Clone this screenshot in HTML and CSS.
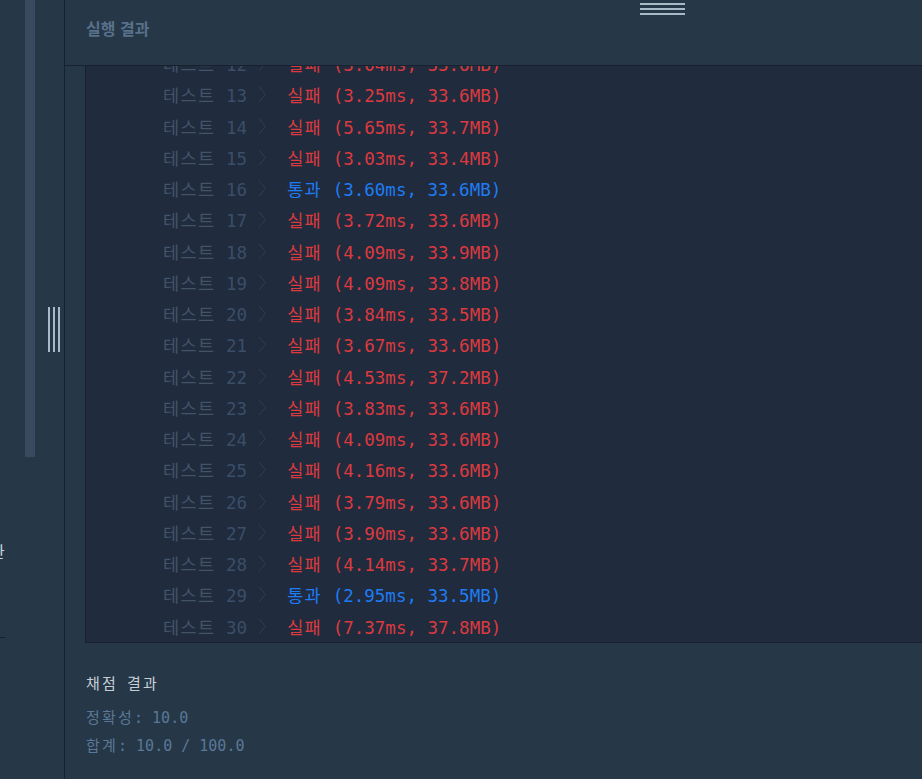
FILE: index.html
```html
<!DOCTYPE html>
<html lang="ko">
<head>
<meta charset="utf-8">
<title>실행 결과</title>
<link rel="stylesheet" href="styles.css">
</head>
<body>
<div class="app">
  <aside class="sidebar">
    <div class="track"></div>
    <div class="resizer"><span></span><span></span><span></span></div>
    <div class="side-text">한</div>
    <div class="side-line"></div>
  </aside>
  <main class="main">
    <header class="header">
      <h2 class="title">실행 결과</h2>
      <div class="handle"><span></span><span></span><span></span></div>
    </header>
    <section class="output-wrap">
      <div class="output">
        <div class="rows">
          <div class="row"><span class="label"><span class="ko">테스트</span> <span class="num">12</span></span><svg class="chev" viewBox="0 0 9 17"><path d="M1 1 L7.5 8.5 L1 16"/></svg><span class="res fail"><span class="ko">실패</span> (3.04ms, 33.6MB)</span></div>
          <div class="row"><span class="label"><span class="ko">테스트</span> <span class="num">13</span></span><svg class="chev" viewBox="0 0 9 17"><path d="M1 1 L7.5 8.5 L1 16"/></svg><span class="res fail"><span class="ko">실패</span> (3.25ms, 33.6MB)</span></div>
          <div class="row"><span class="label"><span class="ko">테스트</span> <span class="num">14</span></span><svg class="chev" viewBox="0 0 9 17"><path d="M1 1 L7.5 8.5 L1 16"/></svg><span class="res fail"><span class="ko">실패</span> (5.65ms, 33.7MB)</span></div>
          <div class="row"><span class="label"><span class="ko">테스트</span> <span class="num">15</span></span><svg class="chev" viewBox="0 0 9 17"><path d="M1 1 L7.5 8.5 L1 16"/></svg><span class="res fail"><span class="ko">실패</span> (3.03ms, 33.4MB)</span></div>
          <div class="row"><span class="label"><span class="ko">테스트</span> <span class="num">16</span></span><svg class="chev" viewBox="0 0 9 17"><path d="M1 1 L7.5 8.5 L1 16"/></svg><span class="res pass"><span class="ko">통과</span> (3.60ms, 33.6MB)</span></div>
          <div class="row"><span class="label"><span class="ko">테스트</span> <span class="num">17</span></span><svg class="chev" viewBox="0 0 9 17"><path d="M1 1 L7.5 8.5 L1 16"/></svg><span class="res fail"><span class="ko">실패</span> (3.72ms, 33.6MB)</span></div>
          <div class="row"><span class="label"><span class="ko">테스트</span> <span class="num">18</span></span><svg class="chev" viewBox="0 0 9 17"><path d="M1 1 L7.5 8.5 L1 16"/></svg><span class="res fail"><span class="ko">실패</span> (4.09ms, 33.9MB)</span></div>
          <div class="row"><span class="label"><span class="ko">테스트</span> <span class="num">19</span></span><svg class="chev" viewBox="0 0 9 17"><path d="M1 1 L7.5 8.5 L1 16"/></svg><span class="res fail"><span class="ko">실패</span> (4.09ms, 33.8MB)</span></div>
          <div class="row"><span class="label"><span class="ko">테스트</span> <span class="num">20</span></span><svg class="chev" viewBox="0 0 9 17"><path d="M1 1 L7.5 8.5 L1 16"/></svg><span class="res fail"><span class="ko">실패</span> (3.84ms, 33.5MB)</span></div>
          <div class="row"><span class="label"><span class="ko">테스트</span> <span class="num">21</span></span><svg class="chev" viewBox="0 0 9 17"><path d="M1 1 L7.5 8.5 L1 16"/></svg><span class="res fail"><span class="ko">실패</span> (3.67ms, 33.6MB)</span></div>
          <div class="row"><span class="label"><span class="ko">테스트</span> <span class="num">22</span></span><svg class="chev" viewBox="0 0 9 17"><path d="M1 1 L7.5 8.5 L1 16"/></svg><span class="res fail"><span class="ko">실패</span> (4.53ms, 37.2MB)</span></div>
          <div class="row"><span class="label"><span class="ko">테스트</span> <span class="num">23</span></span><svg class="chev" viewBox="0 0 9 17"><path d="M1 1 L7.5 8.5 L1 16"/></svg><span class="res fail"><span class="ko">실패</span> (3.83ms, 33.6MB)</span></div>
          <div class="row"><span class="label"><span class="ko">테스트</span> <span class="num">24</span></span><svg class="chev" viewBox="0 0 9 17"><path d="M1 1 L7.5 8.5 L1 16"/></svg><span class="res fail"><span class="ko">실패</span> (4.09ms, 33.6MB)</span></div>
          <div class="row"><span class="label"><span class="ko">테스트</span> <span class="num">25</span></span><svg class="chev" viewBox="0 0 9 17"><path d="M1 1 L7.5 8.5 L1 16"/></svg><span class="res fail"><span class="ko">실패</span> (4.16ms, 33.6MB)</span></div>
          <div class="row"><span class="label"><span class="ko">테스트</span> <span class="num">26</span></span><svg class="chev" viewBox="0 0 9 17"><path d="M1 1 L7.5 8.5 L1 16"/></svg><span class="res fail"><span class="ko">실패</span> (3.79ms, 33.6MB)</span></div>
          <div class="row"><span class="label"><span class="ko">테스트</span> <span class="num">27</span></span><svg class="chev" viewBox="0 0 9 17"><path d="M1 1 L7.5 8.5 L1 16"/></svg><span class="res fail"><span class="ko">실패</span> (3.90ms, 33.6MB)</span></div>
          <div class="row"><span class="label"><span class="ko">테스트</span> <span class="num">28</span></span><svg class="chev" viewBox="0 0 9 17"><path d="M1 1 L7.5 8.5 L1 16"/></svg><span class="res fail"><span class="ko">실패</span> (4.14ms, 33.7MB)</span></div>
          <div class="row"><span class="label"><span class="ko">테스트</span> <span class="num">29</span></span><svg class="chev" viewBox="0 0 9 17"><path d="M1 1 L7.5 8.5 L1 16"/></svg><span class="res pass"><span class="ko">통과</span> (2.95ms, 33.5MB)</span></div>
          <div class="row"><span class="label"><span class="ko">테스트</span> <span class="num">30</span></span><svg class="chev" viewBox="0 0 9 17"><path d="M1 1 L7.5 8.5 L1 16"/></svg><span class="res fail"><span class="ko">실패</span> (7.37ms, 37.8MB)</span></div>
        </div>
      </div>
    </section>
    <section class="summary">
      <div class="sum-title"><span class="ko">채점</span> <span class="ko">결과</span></div>
      <div class="sum-line"><span class="ko">정확성</span>: 10.0</div>
      <div class="sum-line"><span class="ko">합계</span>: 10.0 / 100.0</div>
    </section>
  </main>
</div>
</body>
</html>
```

FILE: styles.css
```css
* { box-sizing: border-box; }
html, body {
  margin: 0;
  padding: 0;
  width: 922px;
  height: 779px;
  overflow: hidden;
  background: #263747;
}
.app {
  display: flex;
  width: 922px;
  height: 779px;
  font-family: "DejaVu Sans Mono", "Noto Sans CJK KR", monospace;
}
.sidebar {
  position: relative;
  width: 65px;
  flex: none;
  height: 779px;
  overflow: hidden;
  background: #263747;
  border-right: 1px solid #18212f;
}
.track {
  position: absolute;
  left: 25px;
  top: 0;
  width: 10px;
  height: 457px;
  background: #384960;
}
.resizer {
  position: absolute;
  left: 48px;
  top: 307px;
  display: flex;
  gap: 3px;
  height: 45px;
}
.resizer span {
  width: 2px;
  height: 45px;
  background: #a9bac7;
}
.side-text {
  margin: 539px 0 0 -10px;
  font-family: "Noto Sans CJK KR", sans-serif;
  font-size: 16px;
  line-height: 24px;
  color: #c9d2db;
}
.side-line {
  margin-top: 74px;
  width: 5px;
  height: 1px;
  background: #16202c;
}
.main {
  flex: 1;
  display: flex;
  flex-direction: column;
  min-width: 0;
}
.header {
  position: relative;
  height: 66px;
  flex: none;
  display: flex;
  align-items: center;
  padding-left: 21px;
  border-bottom: 1px solid #18212f;
  background: #263747;
}
.title {
  margin: 0 0 9px 0;
  font-family: "Noto Sans CJK KR", sans-serif;
  font-weight: 700;
  font-size: 16px;
  line-height: 24px;
  color: #58718b;
}
.handle {
  position: absolute;
  left: 575px;
  top: 3px;
  display: flex;
  flex-direction: column;
  gap: 3px;
}
.handle span {
  width: 45px;
  height: 2px;
  background: #a9bac7;
}
.output-wrap {
  height: 577px;
  flex: none;
  padding-left: 20px;
  background: #263747;
}
.output {
  height: 577px;
  background: #202b3d;
  border-left: 1px solid #18212f;
  border-bottom: 1px solid #18212f;
  overflow: hidden;
}
.rows {
  margin-top: -18px;
}
.row {
  display: flex;
  align-items: center;
  height: 31.25px;
  padding-left: 77px;
  font-size: 17.5px;
  white-space: pre;
}
.row .ko {
  letter-spacing: 1.4px;
}
.label {
  color: #435368;
}
.num {
  color: #3b4e69;
}
.chev {
  width: 9px;
  height: 17px;
  margin-left: 11px;
  margin-right: 20px;
  flex: none;
}
.chev path {
  fill: none;
  stroke: #323e51;
  stroke-width: 1;
}
.fail { color: #dc3a3f; }
.pass { color: #1f7cf4; }
.summary {
  flex: 1;
  padding: 31px 0 0 21px;
  background: #263747;
  font-size: 15px;
  white-space: nowrap;
}
.summary .ko {
  letter-spacing: 2.2px;
}
.sum-title {
  line-height: 20px;
  color: #c6ced7;
  margin-bottom: 10px;
}
.sum-line {
  line-height: 28px;
  color: #5a7897;
}
```
